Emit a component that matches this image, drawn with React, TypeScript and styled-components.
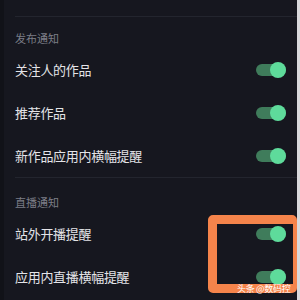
import React from "react";
import styled, { createGlobalStyle } from "styled-components";

const GlobalStyle = createGlobalStyle`
  html, body {
    margin: 0;
    padding: 0;
    background: #16171f;
  }
  body {
    font-family: "Noto Sans CJK SC", "Noto Sans", sans-serif;
  }
`;

const sections = [
  {
    title: "发布通知",
    top: 14,
    items: ["关注人的作品", "推荐作品", "新作品应用内横幅提醒"],
  },
  {
    title: "直播通知",
    top: 17,
    items: ["站外开播提醒", "应用内直播横幅提醒"],
  },
];

const App = () => {
  return (
    <Page>
      <GlobalStyle />
      <Panel>
        {sections.map((section) => (
          <Section key={section.title}>
            <Divider />
            <SectionTitle $top={section.top}>{section.title}</SectionTitle>
            {section.items.map((item) => (
              <Row key={item}>
                <Label>{item}</Label>
                <Toggle>
                  <Knob />
                </Toggle>
              </Row>
            ))}
          </Section>
        ))}
        <Highlight />
        <Watermark>头条 @数码控</Watermark>
      </Panel>
      <Edge />
    </Page>
  );
};

const Page = styled.div`
  display: flex;
  width: 300px;
  height: 300px;
  overflow: hidden;
`;

const Panel = styled.div`
  position: relative;
  flex: 1;
  background: #16171f;
  border-left: 4px solid #111218;
  padding-top: 16px;
  overflow: hidden;
`;

const Edge = styled.div`
  width: 3px;
  background: #d9d9dc;
`;

const Section = styled.div`
  display: flex;
  flex-direction: column;
`;

const Divider = styled.div`
  height: 1px;
  margin-left: 11px;
  background: #23252e;
`;

const SectionTitle = styled.div<{ $top: number }>`
  padding: ${(p) => p.$top}px 0 3px 11px;
  font-size: 11px;
  line-height: 14px;
  color: #7c7e87;
`;

const Row = styled.div`
  display: flex;
  align-items: center;
  justify-content: space-between;
  height: 43px;
  padding: 0 11px 0 11px;
`;

const Label = styled.span`
  font-size: 13px;
  color: #e4e4e8;
  letter-spacing: -0.3px;
`;

const Toggle = styled.div`
  display: flex;
  align-items: center;
  justify-content: flex-end;
  width: 30px;
  height: 12px;
  border-radius: 6px;
  background: #3f7c5b;
`;

const Knob = styled.div`
  width: 16px;
  height: 16px;
  border-radius: 50%;
  background: #5edb9b;
  flex-shrink: 0;
`;

const Highlight = styled.div`
  position: absolute;
  left: 204px;
  top: 215px;
  width: 76px;
  height: 60px;
  border: solid #f5844b;
  border-width: 9px 4px 9px 9px;
  border-radius: 5px;
`;

const Watermark = styled.div`
  position: absolute;
  left: 233px;
  top: 283px;
  font-size: 9px;
  line-height: 11px;
  color: #ffffff;
  white-space: nowrap;
  letter-spacing: -0.3px;
`;

export default App;
